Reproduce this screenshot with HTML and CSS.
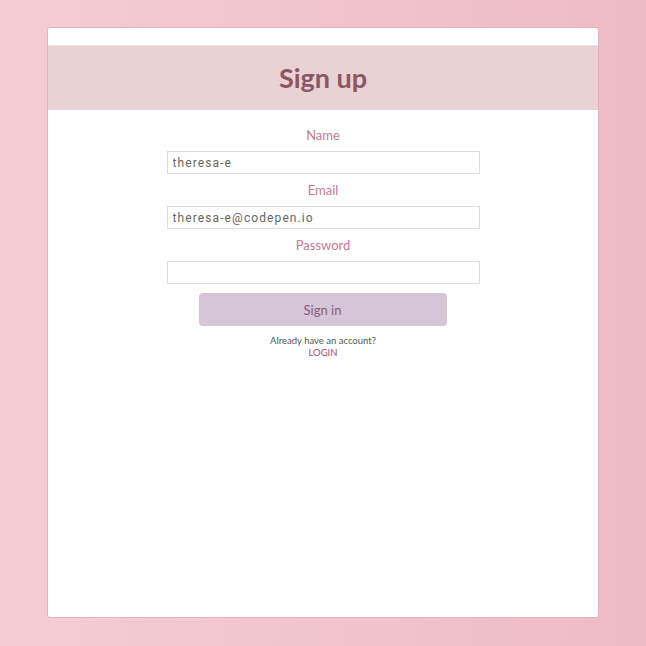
FILE: index.html
```html
<!DOCTYPE html>
<html>
<head>
<meta charset="utf-8">
<link rel="stylesheet" href="styles.css">
</head>
<body>
<div class="page">
  <div class="card">
    <div class="header"><h1>Sign up</h1></div>
    <form class="form">
      <label class="label">Name</label>
      <input class="input" type="text" value="theresa-e">
      <label class="label">Email</label>
      <input class="input" type="text" value="theresa-e@codepen.io">
      <label class="label">Password</label>
      <input class="input" type="password" value="">
      <button class="btn" type="button">Sign in</button>
      <div class="note">Already have an account?</div>
      <a class="login">LOGIN</a>
    </form>
  </div>
</div>
</body>
</html>
```
FILE: styles.css
```css
html, body { margin: 0; padding: 0; }
body {
  width: 646px; height: 646px;
  background: linear-gradient(90deg, #f4cdd3 0%, #eebbc4 100%);
  font-family: Lato, "Open Sans", sans-serif;
  overflow: hidden;
}
.page { padding: 27px 48px 0 47px; }
.card {
  box-sizing: border-box;
  width: 552px; height: 591px;
  background: #fff;
  border: 1px solid #e5b3bc;
  border-radius: 3px;
  padding-top: 17px;
}
.header {
  height: 64px;
  background: #e8d2d3;
  border-top: 1px solid #efdfe0;
  display: flex; align-items: center; justify-content: center;
}
.header h1 {
  margin: 0 0 1px 0;
  font-family: Lato, sans-serif;
  font-weight: 700;
  font-size: 27px;
  color: #8c5662;
}
.form {
  display: flex; flex-direction: column; align-items: center;
  padding-top: 15px;
}
.label {
  display: block;
  font-size: 13px;
  line-height: 20px;
  color: #c57a92;
  margin-bottom: 6px;
}
.input {
  box-sizing: border-box;
  width: 313px; height: 23px;
  border: 1px solid #dcdcdc;
  padding: 0 5px;
  margin: 0 0 6px 0;
  font-family: Roboto, sans-serif;
  font-size: 12px;
  letter-spacing: 1.1px;
  color: #666;
  outline: none;
}
.btn {
  margin-top: 3px;
  margin-right: 1px;
  width: 248px; height: 33px;
  background: #d5c5d7;
  border: none;
  border-radius: 4px;
  font-family: Lato, sans-serif;
  font-size: 13px;
  color: #875d80;
}
.note {
  margin-top: 9px;
  font-size: 9.5px;
  line-height: 12px;
  color: #555;
}
.login {
  font-size: 9.5px;
  line-height: 12px;
  color: #a5506f;
}
```
